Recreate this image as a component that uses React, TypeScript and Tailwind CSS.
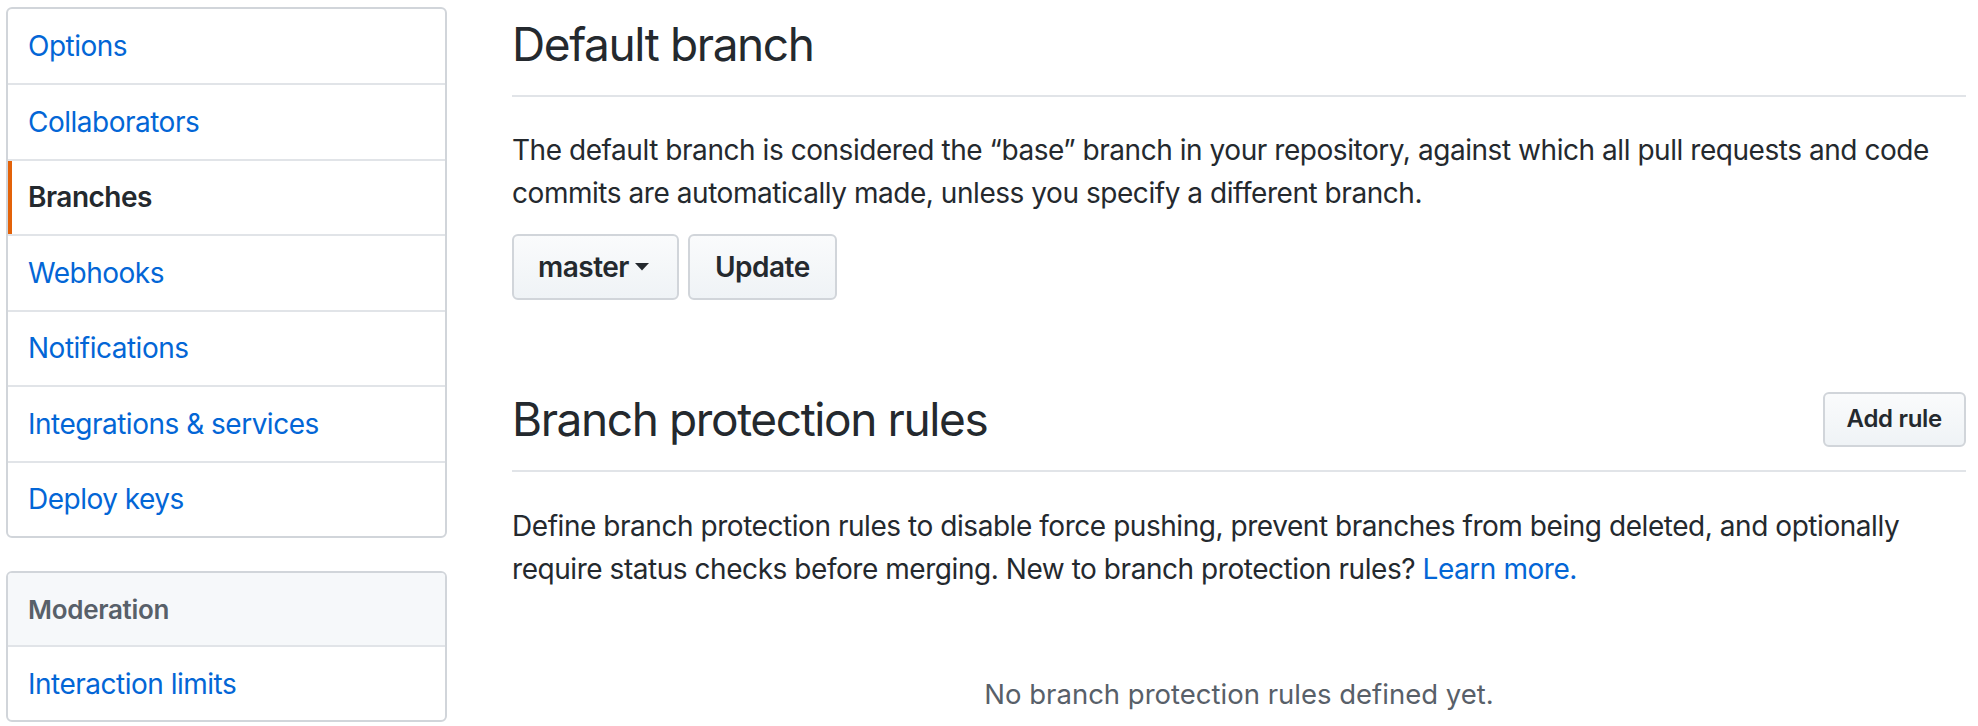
import { useState } from "react";

const font = { fontFamily: "Inter, 'Liberation Sans', sans-serif" };

type NavItem = { label: string; selected?: boolean };

const mainNav: NavItem[] = [
  { label: "Options" },
  { label: "Collaborators" },
  { label: "Branches", selected: true },
  { label: "Webhooks" },
  { label: "Notifications" },
  { label: "Integrations & services" },
  { label: "Deploy keys" },
];

function MenuRow({ label, selected, first }: NavItem & { first?: boolean }) {
  return (
    <a
      href="#"
      className={
        "flex items-center px-[20px] text-[28px] tracking-[-0.5px] " +
        (first ? "h-[74px] " : "h-[75.5px] border-t-2 border-[#e1e4e8] ") +
        (selected
          ? "font-semibold text-[#24292e] shadow-[inset_4px_0_0_#e36209]"
          : "text-[#0366d6]")
      }
    >
      {label}
    </a>
  );
}

function Caret() {
  return (
    <svg width="14" height="8" viewBox="0 0 14 8" className="ml-[6px]">
      <path d="M0 0h14L7 7.5z" fill="#24292e" />
    </svg>
  );
}

export default function App() {
  const [branch] = useState("master");

  return (
    <div className="flex min-h-[726px] bg-white pl-[6px] pt-[7px]" style={font}>
      <aside className="flex w-[441px] shrink-0 flex-col gap-[33px]">
        <nav className="flex flex-col overflow-hidden rounded-[6px] border-2 border-[#d1d5da]">
          {mainNav.map((item, i) => (
            <MenuRow key={item.label} {...item} first={i === 0} />
          ))}
        </nav>
        <nav className="flex flex-col overflow-hidden rounded-[6px] border-2 border-[#d1d5da]">
          <div className="flex h-[72px] items-center bg-[#f6f8fa] px-[20px] text-[26px] font-semibold tracking-[-0.3px] text-[#586069]">
            Moderation
          </div>
          <a href="#" className="flex h-[75px] items-center border-t-2 border-[#e1e4e8] px-[20px] text-[28px] tracking-[-0.5px] text-[#0366d6]">
            Interaction limits
          </a>
        </nav>
      </aside>

      <main className="ml-[65px] flex w-[1454px] flex-col pt-[7px] text-[#24292e]">
        <div className="border-b-2 border-[#e1e4e8] pb-[21px]">
          <h2 className="text-[46px] leading-[60px] font-normal tracking-[-1.4px]">Default branch</h2>
        </div>
        <p className="mt-[32px] text-[28px] leading-[43px] tracking-[-0.45px]">
          The default branch is considered the “base” branch in your repository, against which all pull requests and code
          commits are automatically made, unless you specify a different branch.
        </p>
        <div className="mt-[19px] flex gap-[9px] tracking-[-0.5px]">
          <button className="flex h-[66px] items-center rounded-[6px] border-2 border-[#d1d5da] bg-linear-to-b from-[#fafbfc] to-[#eff3f6] pl-[24px] pr-[28px] text-[28px] font-semibold">
            {branch}
            <Caret />
          </button>
          <button className="flex h-[66px] items-center rounded-[6px] border-2 border-[#d1d5da] bg-linear-to-b from-[#fafbfc] to-[#eff3f6] px-[25px] text-[28px] font-semibold">
            Update
          </button>
        </div>

        <div className="mt-[89px] flex items-center justify-between border-b-2 border-[#e1e4e8] pb-[21px]">
          <h2 className="text-[46px] leading-[60px] font-normal tracking-[-1.4px]">Branch protection rules</h2>
          <button className="flex h-[55px] items-center rounded-[6px] border-2 border-[#d1d5da] bg-linear-to-b from-[#fafbfc] to-[#eff3f6] px-[22px] text-[24px] font-semibold tracking-[-0.3px]">
            Add rule
          </button>
        </div>
        <p className="mt-[33px] text-[28px] leading-[43px] tracking-[-0.45px]">
          Define branch protection rules to disable force pushing, prevent branches from being deleted, and optionally
          require status checks before merging. New to branch protection rules?{" "}
          <a href="#" className="text-[#0366d6]">
            Learn more.
          </a>
        </p>
        <p className="mt-[83px] text-center text-[27.5px] leading-[40px] text-[#586069]">
          No branch protection rules defined yet.
        </p>
      </main>
    </div>
  );
}
